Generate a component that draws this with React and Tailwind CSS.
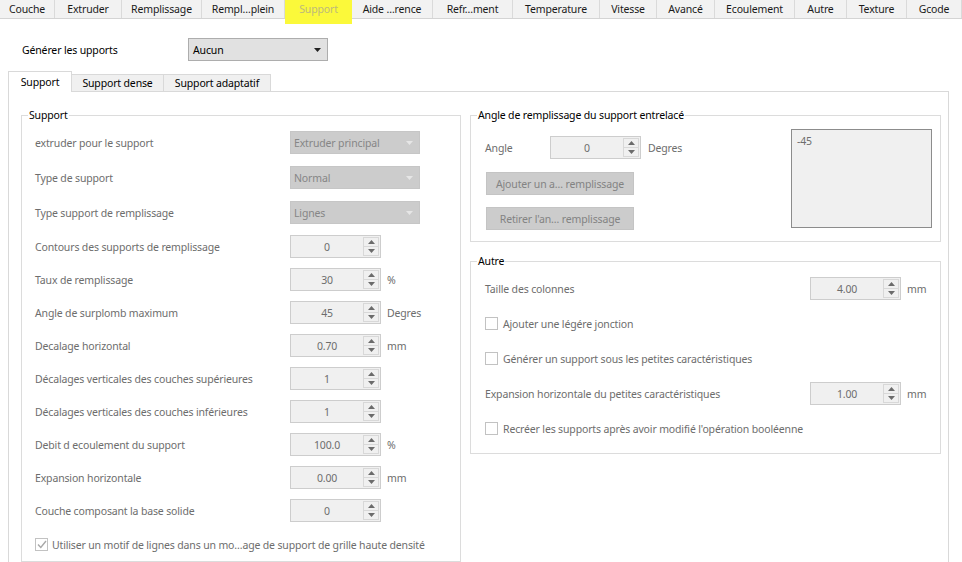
import React from 'react'

const topTabs = [
  { name: 'Couche', w: 'w-[55px]' },
  { name: 'Extruder', w: 'w-[67px]' },
  { name: 'Remplissage', w: 'w-[80px]' },
  { name: 'Rempl…plein', w: 'w-[83px]' },
  { name: 'Support', w: 'w-[67px]', active: true },
  { name: 'Aide …rence', w: 'w-[81px]' },
  { name: 'Refr…ment', w: 'w-[80px]' },
  { name: 'Temperature', w: 'w-[87px]' },
  { name: 'Vitesse', w: 'w-[57px]' },
  { name: 'Avancé', w: 'w-[58px]' },
  { name: 'Ecoulement', w: 'w-[80px]' },
  { name: 'Autre', w: 'w-[52px]' },
  { name: 'Texture', w: 'w-[60px]' },
  { name: 'Gcode', w: 'w-[55px]' }
]

// rows of the left "Support" group
const comboRows = [
  { label: 'extruder pour le support', value: 'Extruder principal' },
  { label: 'Type de support', value: 'Normal' },
  { label: 'Type support de remplissage', value: 'Lignes' }
]

const spinRows = [
  { label: 'Contours des supports de remplissage', value: '0' },
  { label: 'Taux de remplissage', value: '30', unit: '%' },
  { label: 'Angle de surplomb maximum', value: '45', unit: 'Degres' },
  { label: 'Decalage horizontal', value: '0.70', unit: 'mm' },
  { label: 'Décalages verticales des couches supérieures', value: '1' },
  { label: 'Décalages verticales des couches inférieures', value: '1' },
  { label: 'Debit d ecoulement du support', value: '100.0', unit: '%' },
  { label: 'Expansion horizontale', value: '0.00', unit: 'mm' },
  { label: 'Couche composant la base solide', value: '0' }
]

const Arrow = ({ up, color = '#6b6b6b' }) => (
  <svg width="7" height="4" viewBox="0 0 7 4">
    {up ? <path d="M0 4 L3.5 0 L7 4 Z" fill={color} /> : <path d="M0 0 L7 0 L3.5 4 Z" fill={color} />}
  </svg>
)

const Spin = ({ value }) => (
  <div className="flex h-[23px] w-[91px] border border-[#cdcdcd] bg-[#f0f0f0]">
    <div className="flex flex-1 items-center justify-center text-[#6d6d6d]">{value}</div>
    <div className="my-[1px] mr-[1px] flex w-[16px] flex-col border border-[#d8d8d8]">
      <div className="flex flex-1 items-center justify-center border-b border-[#d8d8d8]">
        <Arrow up />
      </div>
      <div className="flex flex-1 items-center justify-center">
        <Arrow />
      </div>
    </div>
  </div>
)

const Combo = ({ value }) => (
  <div className="flex h-[23px] w-[130px] items-center justify-between border border-[#c6c6c6] bg-[#cccccc] pl-[3px] pr-[6px] text-[#868686]">
    <span>{value}</span>
    <Arrow color="#e6e6e6" />
  </div>
)

const Check = ({ checked }) => (
  <div className="flex h-[13px] w-[13px] items-center justify-center border border-[#c2c2c2] bg-white">
    {checked && (
      <svg width="10" height="9" viewBox="0 0 10 9">
        <path d="M1 4.5 L3.8 7.5 L9 1" fill="none" stroke="#a8a8a8" strokeWidth="1.4" />
      </svg>
    )}
  </div>
)

const Group = ({ title, className, children }) => (
  <fieldset className={`border border-[#dcdcdc] ${className}`}>
    <legend className="ml-[6px] px-[1px] leading-[16px] text-black">{title}</legend>
    {children}
  </fieldset>
)

const App = () => {
  return (
    <div className="h-[562px] w-[962px] overflow-hidden bg-white text-[10.5px] leading-[16px] tracking-[-0.15px] text-black [font-family:'Noto_Sans',sans-serif]">
      {/* main tab bar */}
      <div className="flex h-[19px] items-start border-b border-[#d4d4d4] bg-[#f2f2f2]">
        {topTabs.map((tab) =>
          tab.active ? (
            <div
              key={tab.name}
              className={`relative z-10 flex h-[24px] items-start justify-center bg-[#fbf93a] leading-[18px] text-[#bdb97a] ${tab.w}`}
            >
              {tab.name}
            </div>
          ) : (
            <div
              key={tab.name}
              className={`flex h-[18px] items-center justify-center border-r border-[#dadada] text-[#1a1a1a] ${tab.w}`}
            >
              {tab.name}
            </div>
          )
        )}
      </div>

      {/* support type */}
      <div className="mt-[19px] flex items-center pl-[22px]">
        <span className="w-[166px]">Générer les upports</span>
        <div className="flex h-[23px] w-[140px] items-center justify-between border border-[#adadad] bg-[#e1e1e1] pl-[4px] pr-[6px]">
          <span>Aucun</span>
          <Arrow color="#222" />
        </div>
      </div>

      {/* sub tabs */}
      <div className="relative z-10 mt-[10px] flex items-end pl-[8px]">
        <div className="-mb-px flex h-[21px] w-[64px] items-center justify-center border border-b-0 border-[#d9d9d9] bg-white">
          Support
        </div>
        <div className="flex h-[17px] w-[92px] items-center justify-center border border-b-0 border-l-0 border-[#d9d9d9] bg-[#f0f0f0]">
          Support dense
        </div>
        <div className="flex h-[17px] w-[107px] items-center justify-center border border-b-0 border-l-0 border-[#d9d9d9] bg-[#f0f0f0]">
          Support adaptatif
        </div>
      </div>

      <div className="ml-[8px] flex h-[500px] w-[941px] border border-[#d9d9d9] bg-white pl-[12px] pt-[15px]">
        {/* left group */}
        <Group title="Support" className="h-[455px] w-[440px]">
          <div className="flex flex-col pl-[13px] pt-[2px] text-[#6d6d6d]">
            {comboRows.map((row) => (
              <div key={row.label} className="flex h-[35px] items-center">
                <span className="w-[255px]">{row.label}</span>
                <Combo value={row.value} />
              </div>
            ))}
            {spinRows.map((row) => (
              <div key={row.label} className="flex h-[33px] items-center">
                <span className="w-[255px]">{row.label}</span>
                <Spin value={row.value} />
                {row.unit && <span className="ml-[6px]">{row.unit}</span>}
              </div>
            ))}
            <div className="flex h-[35px] items-center gap-[4px]">
              <Check checked />
              <span>Utiliser un motif de lignes dans un mo…age de support de grille haute densité</span>
            </div>
          </div>
        </Group>

        {/* right column */}
        <div className="ml-[9px] flex w-[471px] flex-col">
          <Group title="Angle de remplissage du support entrelacé" className="h-[135px] w-[471px]">
            <div className="flex justify-between text-[#6d6d6d]">
              <div className="flex flex-col pl-[14px]">
                <div className="mt-[13px] flex h-[23px] items-center">
                  <span className="w-[65px]">Angle</span>
                  <Spin value="0" />
                  <span className="ml-[7px]">Degres</span>
                </div>
                <div className="ml-[1px] mt-[13px] flex h-[23px] w-[148px] items-center justify-center border border-[#c4c4c4] bg-[#cccccc] text-[#838383]">
                  Ajouter un a… remplissage
                </div>
                <div className="ml-[1px] mt-[12px] flex h-[23px] w-[148px] items-center justify-center border border-[#c4c4c4] bg-[#cccccc] text-[#838383]">
                  Retirer l'an… remplissage
                </div>
              </div>
              <div className="mr-[8px] mt-[6px] h-[99px] w-[141px] border border-[#8c8c8c] bg-[#f0f0f0] pl-[5px] pt-[3px]">
                -45
              </div>
            </div>
          </Group>

          <Group title="Autre" className="mt-[11px] h-[201px] w-[471px]">
            <div className="flex flex-col pl-[14px] pt-[2px] text-[#6d6d6d]">
              <div className="flex h-[35px] items-center">
                <span className="flex-1">Taille des colonnes</span>
                <Spin value="4.00" />
                <span className="ml-[6px] w-[33px]">mm</span>
              </div>
              <div className="flex h-[35px] items-center gap-[5px]">
                <Check />
                <span>Ajouter une légére jonction</span>
              </div>
              <div className="flex h-[35px] items-center gap-[5px]">
                <Check />
                <span>Générer un support sous les petites caractéristiques</span>
              </div>
              <div className="flex h-[35px] items-center">
                <span className="flex-1">Expansion horizontale du petites caractéristiques</span>
                <Spin value="1.00" />
                <span className="ml-[6px] w-[33px]">mm</span>
              </div>
              <div className="flex h-[35px] items-center gap-[5px]">
                <Check />
                <span>Recréer les supports après avoir modifié l'opération booléenne</span>
              </div>
            </div>
          </Group>
        </div>
      </div>
    </div>
  )
}

export default App
